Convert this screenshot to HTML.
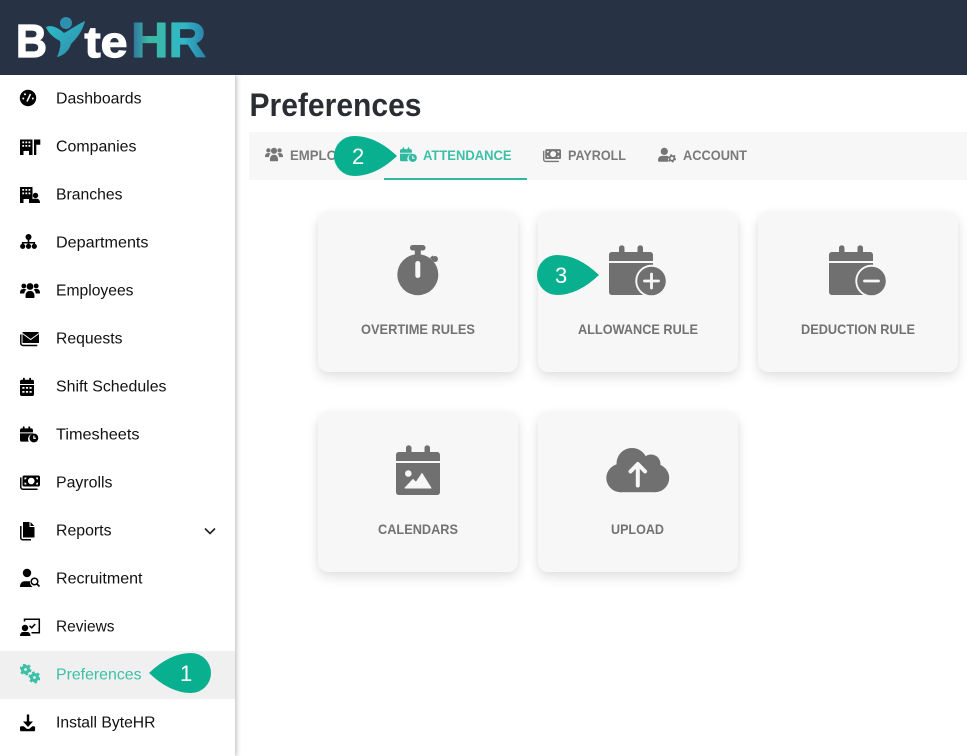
<!DOCTYPE html>
<html lang="en"><head><meta charset="utf-8"><title>Preferences</title>
<style>
html,body{margin:0;padding:0;width:967px;height:756px;overflow:hidden;background:#fff}
.c{position:absolute;width:200px;height:160px;background:#f7f7f7;border-radius:10px;box-shadow:0 5px 12px rgba(0,0,0,.12),0 0 6px rgba(0,0,0,.03)}
.s{position:absolute;left:0;top:75px;width:235px;height:681px;background:#fff;box-shadow:1px 0 5px rgba(0,0,0,.3)}
svg{position:absolute;left:0;top:0}
text{font-family:"Liberation Sans",sans-serif}
.m{font-size:16px;fill:#111}
.t{font-size:14px;font-weight:bold;fill:#7a7a7a}
.l{font-size:14px;font-weight:bold;fill:#727272}
.n{font-size:22px;fill:#fff}
</style></head><body>
<div class="s"></div>
<div class="c" style="left:318px;top:212px"></div>
<div class="c" style="left:538px;top:212px"></div>
<div class="c" style="left:758px;top:212px"></div>
<div class="c" style="left:318px;top:412px"></div>
<div class="c" style="left:538px;top:412px"></div>
<svg width="967" height="756" viewBox="0 0 967 756" xmlns="http://www.w3.org/2000/svg">
<defs>
<linearGradient id="hr" gradientUnits="userSpaceOnUse" x1="132" y1="40" x2="206" y2="40">
<stop offset="0" stop-color="#2f6f9f"/><stop offset=".22" stop-color="#3cb8a2"/><stop offset=".7" stop-color="#30b8c6"/><stop offset="1" stop-color="#2a80aa"/></linearGradient>
<linearGradient id="fig" gradientUnits="userSpaceOnUse" x1="46" y1="22" x2="75" y2="55">
<stop offset="0" stop-color="#2dbccc"/><stop offset="1" stop-color="#2f93ad"/></linearGradient>

<symbol id="users" viewBox="0 0 20 20"><circle cx="3.800" cy="6" r="2.400"/><circle cx="16.200" cy="6" r="2.400"/><circle cx="10" cy="6.500" r="3.400"/><path d="M0 13c0-2.500 1.200-4 3-4h2l1.300.6C5 10.500 4.500 12 4.300 13.500H1c-.6 0-1-.2-1-.5zM20 13c0-2.500-1.200-4-3-4h-2l-1.300.6C15 10.500 15.500 12 15.700 13.500H19c.6 0 1-.2 1-.5zM5.500 16c0-2.800 1.700-5 3.500-5h2c1.800 0 3.500 2.200 3.500 5v1.100c0 .5-.4.900-.9.900H6.400c-.5 0-.9-.4-.9-.9z"/></symbol>

<symbol id="calclock" viewBox="0 0 20 20"><path d="M0 5.500C0 4.500.7 3.700 1.700 3.700H3V2.500c0-1.300 2-1.300 2 0v1.200h4V2.500c0-1.300 2-1.300 2 0v1.200h1.300c1 0 1.700.8 1.700 1.800V8H0z"/><path fill-rule="evenodd" d="M0 9h14v.6a5.500 5.500 0 0 0-4.500 8.400H1.500C.7 18 0 17.300 0 16.500z"/><circle cx="15" cy="14" r="4.800"/><path d="M15 11.500v2.800h2.200" fill="none" stroke="var(--h,#fff)" stroke-width="1.300"/></symbol>

<symbol id="money" viewBox="0 0 20 20"><path fill-rule="evenodd" d="M4 3.500h14.500c.8 0 1.500.7 1.500 1.500v8c0 .8-.7 1.500-1.500 1.500H4c-.8 0-1.500-.7-1.500-1.500V5c0-.8.700-1.500 1.500-1.500zM11.250 5.700a3.300 3.300 0 1 0 .01 0zM4.500 5.500v2a2 2 0 0 0 2-2zM16 5.500a2 2 0 0 0 2 2v-2zM4.500 10.500v2h2a2 2 0 0 0-2-2zM18 10.500a2 2 0 0 0-2 2h2z"/><path d="M.8 6v9c0 1.200 1 2.200 2.200 2.200h14" fill="none" stroke="currentColor" stroke-width="1.500" stroke-linecap="round"/></symbol>

<symbol id="usercog" viewBox="0 0 20 20"><circle cx="7" cy="6" r="4"/><path d="M0 16c0-3.200 2-5 4.500-5h5c.7 0 1.300.1 1.800.4-.3 1.900-.3 4 .5 6.100H1.500C.7 17.500 0 16.800 0 16z"/><circle cx="15.500" cy="13.700" r="2.600" fill="none" stroke="currentColor" stroke-width="2"/><circle cx="15.500" cy="13.700" r="3.900" fill="none" stroke="currentColor" stroke-width="1.400" stroke-dasharray="2 2.080"/></symbol>

<symbol id="cog" viewBox="0 0 20 20"><circle cx="5.500" cy="5.500" r="3" fill="none" stroke="currentColor" stroke-width="3.200"/><circle cx="5.500" cy="5.500" r="5" fill="none" stroke="currentColor" stroke-width="2" stroke-dasharray="2.600 2.640"/><circle cx="14.500" cy="13.500" r="3" fill="none" stroke="currentColor" stroke-width="3.200"/><circle cx="14.500" cy="13.500" r="5" fill="none" stroke="currentColor" stroke-width="2" stroke-dasharray="2.600 2.640"/></symbol>
</defs>

<!-- header -->
<rect width="967" height="75" fill="#273345"/>
<text x="16" y="57" font-size="46" font-weight="bold" fill="#fff" stroke="#fff" stroke-width="1.300" textLength="31" lengthAdjust="spacingAndGlyphs">B</text>
<path d="M46 27C52 24 60 29 64 33C70 30 78 24 85 21C82 33 75 40 71 44C69 51 63 56 57 57C60 50 61 44 60 41C54 38 48 33 46 27Z" fill="url(#fig)"/>
<circle cx="66" cy="23" r="6" fill="#2f8fb0"/>
<text x="84.500" y="57" font-size="44" font-weight="bold" fill="#fff" stroke="#fff" stroke-width="1.200" textLength="43" lengthAdjust="spacingAndGlyphs">te</text>
<text x="131" y="57" font-size="49" font-weight="bold" fill="url(#hr)" stroke="url(#hr)" stroke-width="1.200" stroke-linejoin="round" textLength="75" lengthAdjust="spacingAndGlyphs">HR</text>

<!-- active row -->
<rect x="0" y="651" width="235" height="48" fill="#f0f0f0"/>

<!-- sidebar labels -->
<text class="m" x="56" y="103.500" textLength="85.500" lengthAdjust="spacingAndGlyphs">Dashboards</text>
<text class="m" x="56" y="151.500" textLength="80.500" lengthAdjust="spacingAndGlyphs">Companies</text>
<text class="m" x="56" y="199.500" textLength="66.500" lengthAdjust="spacingAndGlyphs">Branches</text>
<text class="m" x="56" y="247.500" textLength="92.500" lengthAdjust="spacingAndGlyphs">Departments</text>
<text class="m" x="56" y="295.500" textLength="77.500" lengthAdjust="spacingAndGlyphs">Employees</text>
<text class="m" x="56" y="343.500" textLength="66.500" lengthAdjust="spacingAndGlyphs">Requests</text>
<text class="m" x="56" y="391.500" textLength="110.500" lengthAdjust="spacingAndGlyphs">Shift Schedules</text>
<text class="m" x="56" y="439.500" textLength="83.500" lengthAdjust="spacingAndGlyphs">Timesheets</text>
<text class="m" x="56" y="487.500" textLength="56.500" lengthAdjust="spacingAndGlyphs">Payrolls</text>
<text class="m" x="56" y="535.500" textLength="55.500" lengthAdjust="spacingAndGlyphs">Reports</text>
<text class="m" x="56" y="583.500" textLength="86.500" lengthAdjust="spacingAndGlyphs">Recruitment</text>
<text class="m" x="56" y="631.500" textLength="58.500" lengthAdjust="spacingAndGlyphs">Reviews</text>
<text class="m" x="56" y="679.500" textLength="85.500" lengthAdjust="spacingAndGlyphs" style="fill:#3cc0a8">Preferences</text>
<text class="m" x="56" y="727.500" textLength="99.500" lengthAdjust="spacingAndGlyphs">Install ByteHR</text>
<path d="M205 528.500l5 5 5-5" fill="none" stroke="#222" stroke-width="1.600"/>

<!-- sidebar icons -->
<g fill="#000" color="#000">
<!-- dashboard -->
<circle cx="28" cy="98" r="8.200"/>
<path d="M27 101.500L30.500 94" stroke="#fff" stroke-width="1.500" fill="none"/>
<g fill="#fff"><circle cx="23.300" cy="98.500" r="1"/><circle cx="25" cy="94.300" r="1"/><circle cx="32.800" cy="98.500" r="1"/></g>
<!-- companies -->
<path fill-rule="evenodd" d="M20 139.500h12.500V155h-3.500v-4h-5.500v4H20zM22.300 141.500v1.800h1.800v-1.800zM25.400 141.500v1.800h1.800v-1.800zM28.500 141.500v1.800h1.800v-1.800zM22.300 145v1.800h1.800V145zM25.400 145v1.800h1.800V145zM28.500 145v1.800h1.800V145z"/>
<path d="M34 139.500h6.300v5.200H36.300V155H34z"/>
<!-- branches -->
<path fill-rule="evenodd" d="M20 187h12.500v16h-3.500v-4h-5.500v4H20zM22.300 189v1.800h1.800V189zM25.400 189v1.800h1.800V189zM28.500 189v1.800h1.800V189zM22.300 192.500v1.800h1.800v-1.800zM25.400 192.500v1.800h1.800v-1.800zM28.500 192.500v1.800h1.800v-1.800z"/>
<circle cx="35.500" cy="195.500" r="2.700"/><path d="M31 203c0-3 1.500-4.300 3-4.300h3c1.500 0 3 1.300 3 4.300z"/>
<!-- departments -->
<circle cx="28.500" cy="237" r="3"/><path d="M27.700 239h1.600v3h5.800v2.500h-1.700V243.500H29.300v1h-1.600v-1H23.600v1h-1.700V242h5.800z"/>
<circle cx="22.700" cy="246.300" r="2.600"/><circle cx="28.500" cy="246.300" r="2.600"/><circle cx="34.300" cy="246.300" r="2.600"/>
<!-- employees -->
<use href="#users" x="20" y="280" width="20" height="20"/>
<!-- requests -->
<path d="M22.500 332h15.200c.8 0 1.300.5 1.300 1.300V343H22.500z"/>
<path d="M20.800 334.500v8.500c0 1.500 1 2.500 2.500 2.500h14" fill="none" stroke="#000" stroke-width="1.500"/>
<path d="M22.500 333.500l8.200 6 8.200-6" fill="none" stroke="#fff" stroke-width="1"/>
<!-- shift schedules -->
<path fill-rule="evenodd" d="M20 381.500c0-1 .7-1.700 1.700-1.700H23v-1.300c0-1 1.800-1 1.800 0v1.300h4.400v-1.300c0-1 1.800-1 1.800 0v1.300h1.300c1 0 1.700.7 1.700 1.700V384H20zM20 385h14v9.500c0 .8-.7 1.500-1.500 1.500h-11c-.8 0-1.500-.7-1.500-1.500zM22.300 387v1.800h2.200V387zM25.900 387v1.800h2.200V387zM29.500 387v1.800h2.200V387zM22.300 391v1.800h2.200V391zM25.900 391v1.800h2.200V391zM29.500 391v1.800h2.200V391z"/>
<!-- timesheets -->
<use href="#calclock" x="20" y="425" width="18.500" height="18.500"/>
<!-- payrolls -->
<use href="#money" x="20" y="472" width="20" height="20"/>
<!-- reports -->
<path d="M23 522h6.500v5h5v10.500H23z"/><path d="M30.500 522l3.800 4h-3.800z"/>
<path d="M20.800 526v12c0 .9.800 1.700 1.700 1.700h8.500" fill="none" stroke="#000" stroke-width="1.500"/>
<!-- recruitment -->
<circle cx="27" cy="573" r="4.200"/><path d="M20 587c0-3.700 2-5.700 4.500-5.700h5.500c-.3 2 .5 4 2.500 5.700z"/>
<circle cx="34.500" cy="581.500" r="3.300" fill="none" stroke="#000" stroke-width="1.500"/><path d="M37 584l2.500 2.500" stroke="#000" stroke-width="1.600" fill="none"/>
<!-- reviews -->
<circle cx="25" cy="628" r="3.200"/><path d="M20 636c0-2.800 1.500-4 3.200-4h4c1.800 0 3.200 1.200 3.200 4z"/>
<path d="M24.500 621.500v-2.200h14.800v13.400h-7.800" fill="none" stroke="#000" stroke-width="1.500"/>
<path d="M29.500 625.800l2.200 2 3.500-3.800" fill="none" stroke="#000" stroke-width="1.500"/>
<!-- install -->
<path d="M26.800 714.500h2.400v7h3.800L28 727l-5-5.500h3.800z"/><path d="M20 727.500c0-.8.500-1.300 1.300-1.300h2.500l3 2.700h2.500l3-2.700h1.500c.8 0 1.300.5 1.300 1.300v2.500c0 .8-.5 1.300-1.300 1.300H21.300c-.8 0-1.300-.5-1.300-1.300z"/>
</g>
<use href="#cog" x="20" y="664" width="20" height="20" color="#3cc0a8"/>

<!-- title -->
<text x="249.500" y="116" font-size="32" font-weight="bold" fill="#2a2e33" textLength="172" lengthAdjust="spacingAndGlyphs">Preferences</text>

<!-- tabs -->
<rect x="249" y="132" width="718" height="48" fill="#f7f7f7"/>
<rect x="384" y="178" width="143" height="2" fill="#2fbaa0"/>
<use href="#users" x="265" y="145" width="18" height="18" fill="#757575"/>
<text class="t" x="290" y="160" textLength="82" lengthAdjust="spacingAndGlyphs">EMPLOYEES</text>
<use href="#calclock" x="400" y="146" width="17" height="17" fill="#2fbaa0" color="#2fbaa0" style="--h:#f7f7f7"/>
<text class="t" x="423" y="160" textLength="88.500" lengthAdjust="spacingAndGlyphs" style="fill:#3cc0a8">ATTENDANCE</text>
<use href="#money" x="543" y="146" width="18" height="18" fill="#757575" color="#757575"/>
<text class="t" x="568" y="160" textLength="58" lengthAdjust="spacingAndGlyphs">PAYROLL</text>
<use href="#usercog" x="658" y="146" width="18" height="18" fill="#757575" color="#757575"/>
<text class="t" x="683" y="160" textLength="64" lengthAdjust="spacingAndGlyphs">ACCOUNT</text>

<!-- card labels -->
<text class="l" x="361" y="334" textLength="114" lengthAdjust="spacingAndGlyphs">OVERTIME RULES</text>
<text class="l" x="578" y="334" textLength="120" lengthAdjust="spacingAndGlyphs">ALLOWANCE RULE</text>
<text class="l" x="801" y="334" textLength="114" lengthAdjust="spacingAndGlyphs">DEDUCTION RULE</text>
<text class="l" x="378" y="534" textLength="80" lengthAdjust="spacingAndGlyphs">CALENDARS</text>
<text class="l" x="611" y="534" textLength="53" lengthAdjust="spacingAndGlyphs">UPLOAD</text>

<!-- stopwatch -->
<g fill="#707070">
<circle cx="417.800" cy="274.700" r="20.500"/>
<rect x="410" y="245" width="15.500" height="5.500" rx="2.700"/>
<rect x="414.800" y="248" width="6" height="8"/>
<path d="M431 259l2.500-2.500" stroke="#707070" stroke-width="3"/>
<circle cx="435" cy="259" r="3"/>
</g>
<rect x="415.300" y="261" width="5" height="17" rx="2.500" fill="#f7f7f7"/>

<!-- calendar plus -->
<g fill="#707070">
<path d="M609 255c0-1.800 1.200-3 3-3h7v-4c0-3.500 5.500-3.500 5.500 0v4h13v-4c0-3.500 5.500-3.500 5.500 0v4h7c1.800 0 3 1.200 3 3v6h-44z"/>
<path d="M609 263h44v32h-41c-1.800 0-3-1.200-3-3z"/>
</g>
<circle cx="651.500" cy="281" r="16.200" fill="#f7f7f7"/>
<circle cx="651.500" cy="281" r="14.300" fill="#707070"/>
<path d="M651.500 274v14M644.500 281h14" stroke="#f7f7f7" stroke-width="2.800" stroke-linecap="round"/>

<!-- calendar minus -->
<g fill="#707070">
<path d="M829 255c0-1.800 1.200-3 3-3h7v-4c0-3.500 5.500-3.500 5.500 0v4h13v-4c0-3.500 5.500-3.500 5.500 0v4h7c1.800 0 3 1.200 3 3v6h-44z"/>
<path d="M829 263h44v32h-41c-1.800 0-3-1.200-3-3z"/>
</g>
<circle cx="871.500" cy="281" r="16.200" fill="#f7f7f7"/>
<circle cx="871.500" cy="281" r="14.300" fill="#707070"/>
<path d="M864.500 281h14" stroke="#f7f7f7" stroke-width="2.800" stroke-linecap="round"/>

<!-- calendar image -->
<g fill="#707070">
<path d="M396 455c0-1.800 1.200-3 3-3h7v-4c0-3.500 5.500-3.500 5.500 0v4h13v-4c0-3.500 5.500-3.500 5.500 0v4h7c1.800 0 3 1.200 3 3v6h-44z"/>
<path d="M396 463h44v29c0 1.800-1.200 3-3 3h-38c-1.800 0-3-1.200-3-3z"/>
</g>
<circle cx="408.300" cy="473.500" r="3.300" fill="#f7f7f7"/>
<path d="M405 488l8-8.500 3 3 6-9 9 14.500z" fill="#f7f7f7" stroke="#f7f7f7" stroke-linejoin="round"/>

<!-- cloud -->
<g fill="#707070">
<circle cx="620.500" cy="478" r="14.200"/>
<circle cx="632" cy="463.500" r="15.500"/>
<circle cx="651" cy="464" r="9.500"/>
<circle cx="655" cy="478" r="14.200"/>
<rect x="620" y="462" width="35" height="30.200"/>
</g>
<path d="M637.800 485.500V464.500M630.500 471.500l7.300-7.500 7.300 7.500" fill="none" stroke="#f7f7f7" stroke-width="4" stroke-linecap="round" stroke-linejoin="round"/>

<!-- callouts -->
<g fill="#08b08f">
<path d="M149 673Q170 653 191 653a20 20 0 0 1 0 40Q170 693 149 673Z"/>
<path d="M397 156Q376 136 354 136a20 20 0 0 0 0 40Q376 176 397 156Z"/>
<path d="M599 275Q578 255 557 255a20 20 0 0 0 0 40Q578 295 599 275Z"/>
</g>
<text class="n" x="180" y="681">1</text>
<text class="n" x="352" y="164">2</text>
<text class="n" x="555" y="283">3</text>
</svg>
</body></html>
